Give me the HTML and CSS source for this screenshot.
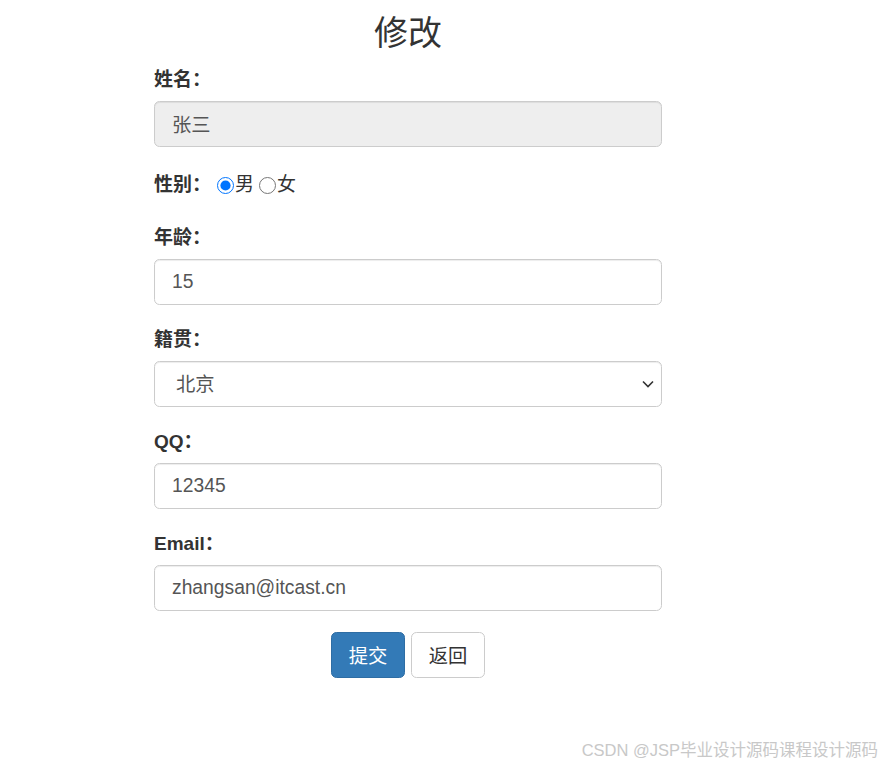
FILE: index.html
```html
<!DOCTYPE html>
<html lang="zh-CN">
<head>
<meta charset="utf-8">
<title>修改</title>
<link rel="stylesheet" href="styles.css">
</head>
<body>
<div class="container">
  <h3 class="title">修改</h3>
  <form class="form">
    <div class="form-group">
      <label class="label">姓名：</label>
      <input class="control disabled" type="text" value="张三" disabled>
    </div>
    <div class="form-group gender">
      <label class="label inline">性别：</label>
      <input class="radio" type="radio" name="sex" checked><span class="opt">男</span>
      <input class="radio second" type="radio" name="sex"><span class="opt">女</span>
    </div>
    <div class="form-group">
      <label class="label">年龄：</label>
      <input class="control" type="text" value="15">
    </div>
    <div class="form-group">
      <label class="label">籍贯：</label>
      <div class="select-wrap">
        <select class="control select">
          <option>北京</option>
          <option>上海</option>
          <option>广州</option>
        </select>
        <svg class="chevron" width="12" height="8" viewBox="0 0 12 8"><path d="M1 1.5 L6 6.5 L11 1.5" fill="none" stroke="#333" stroke-width="1.6"/></svg>
      </div>
    </div>
    <div class="form-group">
      <label class="label">QQ：</label>
      <input class="control" type="text" value="12345">
    </div>
    <div class="form-group">
      <label class="label">Email：</label>
      <input class="control" type="text" value="zhangsan@itcast.cn">
    </div>
    <div class="actions">
      <button class="btn primary" type="button">提交</button>
      <button class="btn default" type="button">返回</button>
    </div>
  </form>
</div>
<div class="watermark">CSDN @JSP毕业设计源码课程设计源码</div>
</body>
</html>
```
FILE: styles.css
```css
html, body {
  margin: 0;
  padding: 0;
  background: #fff;
}
body {
  font-family: "Liberation Sans", "Noto Sans CJK SC", sans-serif;
  color: #333;
  font-size: 19.3px;
}
.container {
  width: 508px;
  margin-left: 154px;
}
.title {
  margin: 13px 0 13px;
  font-size: 34px;
  line-height: 40px;
  font-weight: normal;
  text-align: center;
  color: #333;
}
.form-group {
  margin-bottom: 21px;
}
.label {
  display: block;
  font-weight: bold;
  font-size: 19px;
  line-height: 28px;
  margin-bottom: 7px;
  color: #333;
}
.label.inline {
  display: inline-block;
  margin: 0 6px 0 0;
}
.gender {
  display: flex;
  align-items: center;
  height: 35px;
  padding-top: 3px;
  padding-bottom: 4px;
  box-sizing: border-box;
}
.radio {
  width: 17px;
  height: 17px;
  margin: 0 1px 0 0;
  accent-color: #0075ff;
}
.radio.second {
  margin-left: 5px;
}
.opt {
  font-size: 19px;
  line-height: 28px;
  color: #333;
}
.control {
  display: block;
  box-sizing: border-box;
  width: 100%;
  height: 46px;
  padding: 0 17px;
  font-family: "Liberation Sans", "Noto Sans CJK SC", sans-serif;
  font-size: 19.3px;
  color: #555;
  background: #fff;
  border: 1px solid #ccc;
  border-radius: 5.5px;
  box-shadow: inset 0 1px 1px rgba(0, 0, 0, 0.075);
  outline: none;
}
.control.disabled {
  background: #eee;
}
.select-wrap {
  position: relative;
}
.select {
  appearance: none;
  -webkit-appearance: none;
  padding-left: 21px;
}
.chevron {
  position: absolute;
  right: 8px;
  top: 19px;
  pointer-events: none;
}
.actions {
  display: flex;
  justify-content: center;
  gap: 6px;
}
.btn {
  box-sizing: border-box;
  width: 74px;
  height: 46px;
  font-family: "Liberation Sans", "Noto Sans CJK SC", sans-serif;
  font-size: 19.3px;
  border-radius: 5.5px;
  border: 1px solid #ccc;
  padding: 0;
}
.btn.primary {
  background: #337ab7;
  border-color: #2e6da4;
  color: #fff;
}
.btn.default {
  background: #fff;
  color: #333;
}
.watermark {
  position: absolute;
  right: 4px;
  top: 739px;
  font-size: 16.5px;
  line-height: 22px;
  color: #c8c8c8;
  font-family: "Liberation Sans", "Noto Sans CJK SC", sans-serif;
}
```
